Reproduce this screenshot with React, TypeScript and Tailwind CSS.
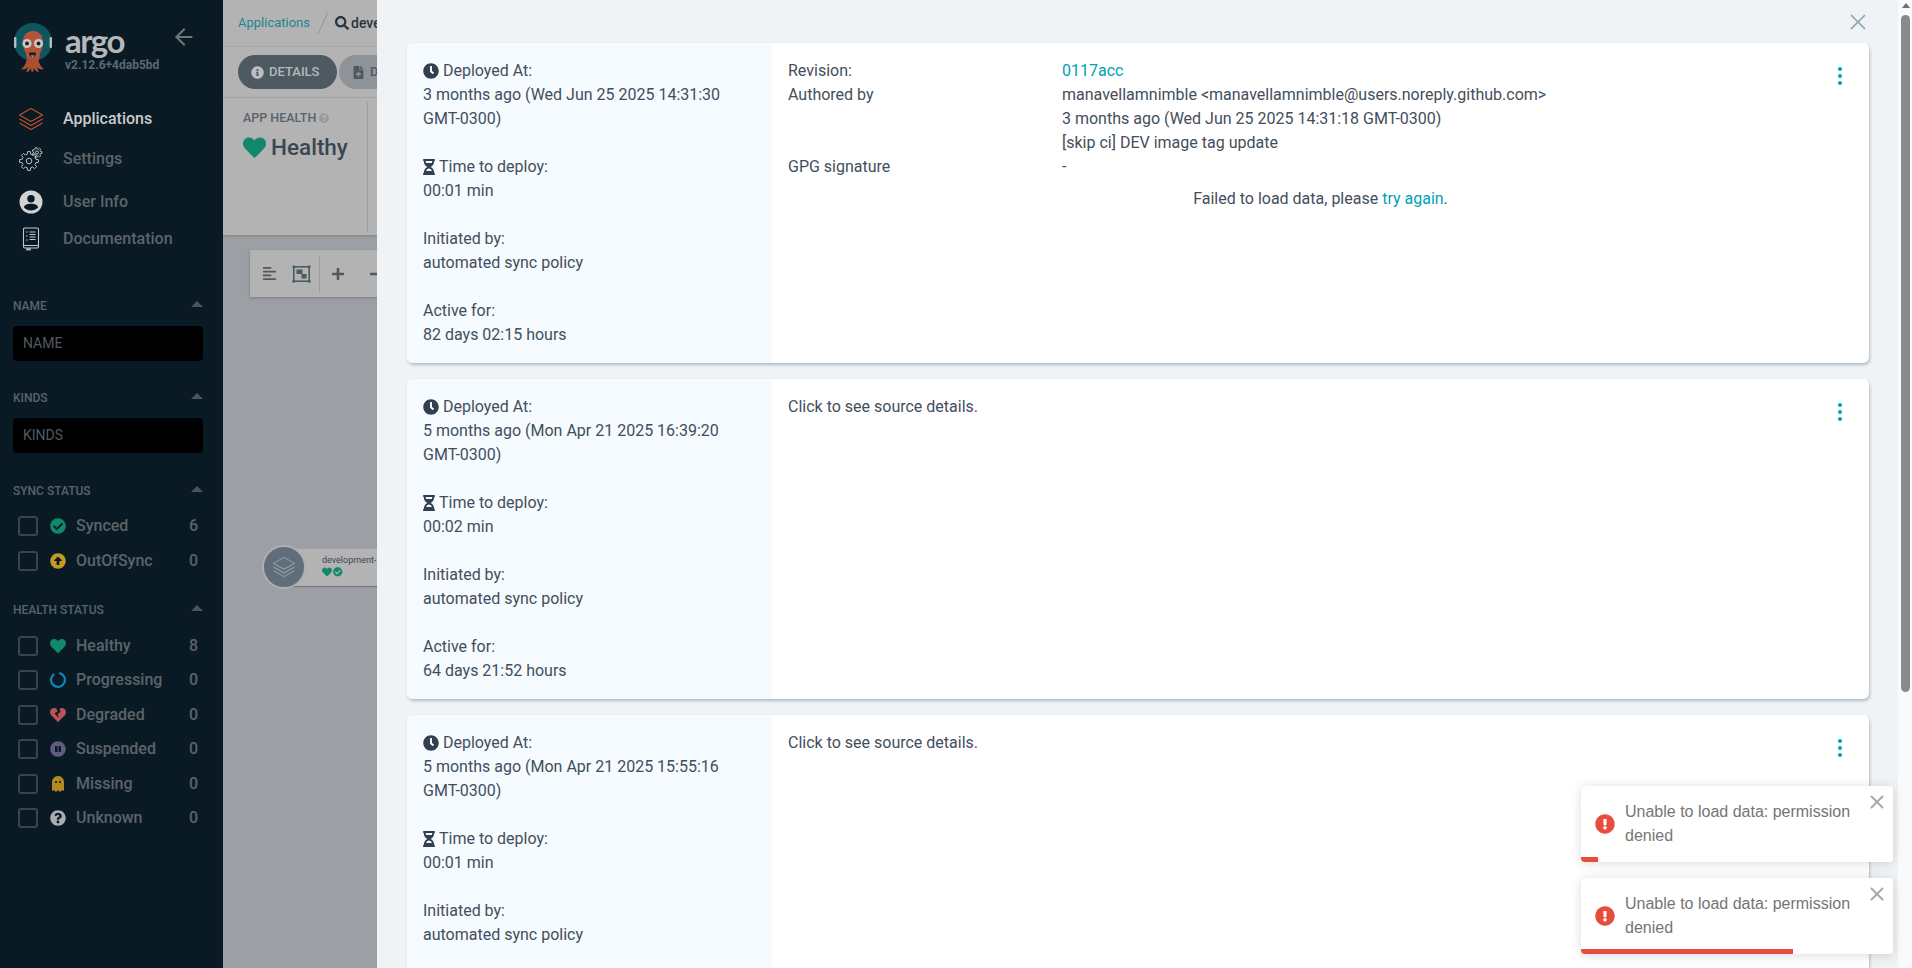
import React from "react";
import {
  FaHeart, FaHeartBroken, FaGhost, FaCheckCircle, FaArrowAltCircleUp, FaPauseCircle,
  FaQuestionCircle, FaClock, FaHourglassHalf, FaInfoCircle, FaFileMedical,
  FaSearch, FaAlignLeft, FaPlus, FaMinus, FaExclamationCircle,
} from "react-icons/fa";
import { ArrowLeft, X } from "lucide-react";

function gearPath(cx: number, cy: number, ro: number, ri: number, teeth: number) {
  let d = "";
  const step = (Math.PI * 2) / teeth;
  for (let i = 0; i < teeth; i++) {
    const a = i * step;
    const pts: [number, number][] = [
      [ri, a - step * 0.32],
      [ro, a - step * 0.18],
      [ro, a + step * 0.18],
      [ri, a + step * 0.32],
    ];
    pts.forEach(([r, t], j) => {
      d += `${i === 0 && j === 0 ? "M" : "L"}${(cx + r * Math.cos(t)).toFixed(2)} ${(cy + r * Math.sin(t)).toFixed(2)} `;
    });
  }
  return d + "Z";
}

function Logo() {
  return (
    <svg width="40" height="52" viewBox="12 22 40 52" className="shrink-0">
      <circle cx="32" cy="42" r="19" fill="#0e5560" />
      <rect x="13" y="37" width="2.4" height="11" rx="1" fill="#b8bcbe" />
      <rect x="48.6" y="37" width="2.4" height="11" rx="1" fill="#b8bcbe" />
      <path d="M22 42c0-7 4-11 10-11s10 4 10 11c0 6-2 9-3 12l-1 6H26l-1-6c-1-3-3-6-3-12z" fill="#b0553a" />
      <path d="M26 58c-1 6-3 9-6 11 3 1 5 0 7-2-1 2-1 4-2 5 3 0 4-2 5-4 0 2 0 3 1 4 1 0 2-2 2-4 1 2 2 4 5 4-1-1-1-3-2-5 2 2 4 3 7 2-3-2-5-5-6-11z" fill="#a94f34" />
      <circle cx="26" cy="43.5" r="4.6" fill="#c8c8c8" />
      <circle cx="37.5" cy="43.5" r="4.6" fill="#c8c8c8" />
      <circle cx="26" cy="43.5" r="2" fill="#222" />
      <circle cx="37.5" cy="43.5" r="2" fill="#222" />
      <path d="M28 52.5h7c0 3-1.5 4.5-3.5 4.5s-3.5-1.5-3.5-4.5z" fill="#1d1d1d" />
      <path d="M29.5 55.5h4l-2 1.5z" fill="#c8c8c8" />
    </svg>
  );
}

function LayersIcon() {
  return (
    <svg width="24" height="24" viewBox="0 0 24 24" fill="none" stroke="#c2512c" strokeWidth="1.1" strokeLinejoin="round">
      <path d="M12 1.5 23.5 8 12 14.5.5 8z" />
      <path d="M.5 12 12 18.5 23.5 12" />
      <path d="M.5 16 12 22.5 23.5 16" />
    </svg>
  );
}

function GearsIcon() {
  return (
    <svg width="24" height="24" viewBox="0 0 24 24" fill="none" stroke="#b9bdc0" strokeWidth="1" strokeLinejoin="round">
      <path d={gearPath(10, 14, 9.5, 7, 8)} />
      <circle cx="10" cy="14" r="2.8" />
      <path d={gearPath(18, 5.5, 5, 3.6, 7)} />
      <circle cx="18" cy="5.5" r="1.5" />
    </svg>
  );
}

function UserIcon() {
  return (
    <svg width="24" height="24" viewBox="0 0 24 24">
      <circle cx="12" cy="12" r="11.5" fill="#d2d2d2" />
      <circle cx="12" cy="8.7" r="3.7" fill="#0a1a24" />
      <path d="M5 17.5c0-2.6 3-3.8 7-3.8s7 1.2 7 3.8c-1.8 1.9-4.2 2.9-7 2.9s-5.2-1-7-2.9z" fill="#0a1a24" />
    </svg>
  );
}

function DocIcon() {
  return (
    <svg width="24" height="24" viewBox="0 0 24 24" fill="none" stroke="#c4c8cb" strokeWidth="1.1">
      <rect x="4.5" y="1" width="15" height="20" rx="1.2" />
      <path d="M4.5 18.5h15M8 21v2l1.5-.8L11 23v-2" />
      <path d="M7 5h1.5M7 9h1.5M7 13h1.5M10.5 5h6M10.5 7.5h6M10.5 10h6M10.5 12.5h6" strokeWidth="1.2" />
    </svg>
  );
}

function RingIcon() {
  return (
    <svg width="16" height="16" viewBox="0 0 16 16" fill="none" stroke="#0f86b5" strokeWidth="2.2">
      <path d="M9.2 1.2A6.9 6.9 0 1 1 4.2 2.2" />
    </svg>
  );
}

const navItems = [
  { label: "Applications", icon: <LayersIcon />, cls: "mt-[2px]", text: "text-[#c9cbcc] font-medium" },
  { label: "Settings", icon: <GearsIcon />, cls: "mt-[4px]", text: "text-[#5c6369] font-medium" },
  { label: "User Info", icon: <UserIcon />, cls: "mt-[7px]", text: "text-[#5c6369] font-medium" },
  { label: "Documentation", icon: <DocIcon />, cls: "mt-[1px]", text: "text-[#5c6369] font-medium" },
];

function SectionLabel({ title, cls }: { title: string; cls: string }) {
  return (
    <div className={`h-[16px] flex items-center justify-between pl-[13px] pr-[20px] ${cls}`}>
      <span className="text-[12px] leading-[16px] font-medium text-[#56646f]">{title}</span>
      <span className="w-0 h-0 border-l-[6.5px] border-r-[6.5px] border-b-[6px] border-l-transparent border-r-transparent border-b-[#4b545c] -mt-[4px]" />
    </div>
  );
}

function FilterInput({ placeholder }: { placeholder: string }) {
  return (
    <div className="mt-[12px] mx-[13px] h-[35px] w-[190px] rounded-[4px] bg-black flex items-center pl-[10px] text-[14px] text-[#525a61]">
      {placeholder}
    </div>
  );
}

function StatusRow({ label, count, icon }: { label: string; count: number; icon: React.ReactNode }) {
  return (
    <div className="h-[34.4px] flex items-center pl-[18px] pr-[25px]">
      <span className="w-[20px] h-[20px] rounded-[3px] border-2 border-[#3a444c] shrink-0" />
      <span className="w-[38px] flex justify-center pl-[2px] shrink-0">{icon}</span>
      <span className="flex-1 text-[16px] font-medium text-[#5c6369]">{label}</span>
      <span className="text-[16px] font-medium text-[#5c6369]">{count}</span>
    </div>
  );
}

function DeployInfo({ date, time, active }: { date: string; time: string; active?: string }) {
  return (
    <div className="w-[365px] shrink-0 bg-[#f5fbfe] p-[16px] text-[16px] leading-[24px] rounded-l-[6px]">
      <div className="flex items-center gap-[4px]">
        <FaClock className="text-[16px] text-[#343f4d]" />
        <span>Deployed At:</span>
      </div>
      <div className="mb-[24px]">{date}</div>
      <div className="flex items-center gap-[4px]">
        <FaHourglassHalf className="w-[12px] h-[16px] text-[#343f4d]" />
        <span>Time to deploy:</span>
      </div>
      <div className="mb-[24px]">{time}</div>
      <div>Initiated by:</div>
      <div className="mb-[24px]">automated sync policy</div>
      {active && (
        <>
          <div>Active for:</div>
          <div>{active}</div>
        </>
      )}
    </div>
  );
}

function Dots() {
  return (
    <div className="shrink-0 mr-[27px] mt-[8px] flex flex-col gap-[2.5px]">
      <span className="w-[4.4px] h-[4.4px] rounded-full bg-[#00a2b3]" />
      <span className="w-[4.4px] h-[4.4px] rounded-full bg-[#00a2b3]" />
      <span className="w-[4.4px] h-[4.4px] rounded-full bg-[#00a2b3]" />
    </div>
  );
}

function Card({ children, deploy, last }: { children: React.ReactNode; deploy: { date: string; time: string; active?: string }; last?: boolean }) {
  return (
    <div className={`flex h-[320px] shrink-0 bg-white rounded-[6px] shadow-[1px_2px_3px_rgba(70,90,110,0.35)] text-[#434e5c] ${last ? "" : "mb-[16px]"}`}>
      <DeployInfo {...deploy} />
      {children}
    </div>
  );
}

function Toast({ barWidth }: { barWidth: string }) {
  return (
    <div className="relative w-[312px] h-[76px] bg-white rounded-[4px] shadow-[0_1px_10px_rgba(0,0,0,0.1),0_2px_15px_rgba(0,0,0,0.05)] flex items-center pl-[14px] overflow-hidden">
      <FaExclamationCircle className="text-[20px] text-[#e74c3c] shrink-0" />
      <div className="ml-[10px] w-[240px] text-[16px] leading-[24px] text-[#757575] font-['Liberation_Sans',Arial,sans-serif]">
        Unable to load data: permission denied
      </div>
      <X size={22} strokeWidth={2.2} className="absolute right-[5px] top-[5px] text-[#a9a9a9]" />
      <div className={`absolute left-0 bottom-0 h-[5px] bg-[#e74c3c] ${barWidth}`} />
    </div>
  );
}

export default function App() {
  return (
    <div className="relative flex h-[968px] w-[1912px] overflow-hidden font-['Roboto',sans-serif]">
      {/* Sidebar */}
      <aside className="w-[223px] shrink-0 bg-[#0a1a24] flex flex-col">
        <div className="h-[99px] flex items-start pl-[13px] pt-[22px]">
          <Logo />
          <div className="ml-[12px] flex flex-col">
            <span className="h-[26px] text-[33px] leading-[26px] font-bold font-['Lato',sans-serif] text-[#b5b7b8] tracking-[-1.5px] mt-[5px]">argo</span>
            <span className="text-[12px] leading-[14px] font-bold text-[#5b6871] mt-[5px]">v2.12.6+4dab5bd</span>
          </div>
          <ArrowLeft size={26} strokeWidth={1.9} className="ml-[12px] mt-[2px] text-[#70777c]" />
        </div>
        {navItems.map((n) => (
          <div key={n.label} className={`h-[36px] flex items-center pl-[19px] ${n.cls}`}>
            <span className="w-[24px] flex justify-center">{n.icon}</span>
            <span className={`ml-[20px] text-[16px] ${n.text}`}>{n.label}</span>
          </div>
        ))}

        <SectionLabel title="NAME" cls="mt-[41px]" />
        <FilterInput placeholder="NAME" />
        <SectionLabel title="KINDS" cls="mt-[29px]" />
        <FilterInput placeholder="KINDS" />
        <SectionLabel title="SYNC STATUS" cls="mt-[30px]" />
        <div className="mt-[10px]">
          <StatusRow label="Synced" count={6} icon={<FaCheckCircle className="text-[16px] text-[#12886b]" />} />
          <StatusRow label="OutOfSync" count={0} icon={<FaArrowAltCircleUp className="text-[16px] text-[#c29a25]" />} />
        </div>
        <SectionLabel title="HEALTH STATUS" cls="mt-[24px]" />
        <div className="mt-[11px]">
          <StatusRow label="Healthy" count={8} icon={<FaHeart className="text-[16px] text-[#12886b]" />} />
          <StatusRow label="Progressing" count={0} icon={<RingIcon />} />
          <StatusRow label="Degraded" count={0} icon={<FaHeartBroken className="text-[16px] text-[#b95457]" />} />
          <StatusRow label="Suspended" count={0} icon={<FaPauseCircle className="text-[16px] text-[#635a80]" />} />
          <StatusRow label="Missing" count={0} icon={<FaGhost className="text-[16px] text-[#b38a1f]" />} />
          <StatusRow label="Unknown" count={0} icon={<FaQuestionCircle className="text-[16px] text-[#a9aeb3]" />} />
        </div>
      </aside>

      {/* Dimmed page beneath the panel */}
      <main className="w-[154px] shrink-0 flex flex-col overflow-hidden bg-[#9ca0a4]">
        <div className="h-[47px] shrink-0 bg-[#b3b3b3] border-b border-[#a8a8a8] flex items-center pl-[15px] whitespace-nowrap">
          <span className="text-[13px] text-[#1b8794]">Applications</span>
          <svg width="12" height="24" viewBox="0 0 12 24" className="ml-[7px] shrink-0">
            <path d="M11 1 1 23" stroke="#949494" strokeWidth="1" />
          </svg>
          <FaSearch className="ml-[6px] text-[14px] text-[#2a333b] shrink-0" />
          <span className="ml-[2px] text-[14px] font-medium text-[#2a333b]">development</span>
        </div>
        <div className="h-[51px] shrink-0 bg-[#b3b3b3] border-b border-[#a8a8a8] flex items-center pl-[15px] gap-[2px] whitespace-nowrap">
          <div className="h-[34px] w-[99px] shrink-0 rounded-[17px] bg-[#4d5a62] flex items-center pl-[13px] gap-[5px] text-[13px] font-medium text-[#b5b8ba]">
            <FaInfoCircle className="text-[13px] text-[#bcbfc1]" /> DETAILS
          </div>
          <div className="h-[34px] w-[99px] shrink-0 rounded-[17px] bg-[#8d9399] flex items-center pl-[13px] gap-[5px] text-[13px] font-medium text-[#4d5a62]">
            <FaFileMedical className="text-[13px]" /> DIFF
          </div>
        </div>
        <div className="h-[137px] shrink-0 bg-[#b3b3b3] shadow-[0_1px_3px_rgba(0,0,0,0.2)] flex pl-[20px] py-[4px] whitespace-nowrap">
          <div className="w-[125px] shrink-0 border-r border-[#9c9c9c] pt-[7px]">
            <div className="flex items-center gap-[3px] text-[12.5px] font-medium text-[#58636b]">
              APP HEALTH <FaQuestionCircle className="text-[10px] text-[#959a9e]" />
            </div>
            <div className="mt-[3px] flex items-center gap-[5px]">
              <FaHeart className="text-[23px] text-[#12886b]" />
              <span className="text-[22.5px] font-medium text-[#3a4750]">Healthy</span>
            </div>
          </div>
        </div>
        <div className="relative flex-1">
          <div className="absolute left-[27px] top-[15px] w-[200px] h-[47px] bg-[#b3b3b3] shadow-[0_1px_3px_rgba(0,0,0,0.2)] flex items-center pl-[12px] text-[#4d5a62]">
            <FaAlignLeft className="text-[15px]" />
            <svg width="19" height="18" viewBox="0 0 19 18" className="ml-[15px] shrink-0" fill="none" stroke="#4d5a62" strokeWidth="1.6">
              <rect x="1.8" y="1.8" width="15.4" height="14.4" />
              <rect x="4.5" y="4.5" width="6" height="4.5" fill="#4d5a62" stroke="none" />
              <rect x="9.5" y="9" width="5" height="4.5" fill="#4d5a62" stroke="none" />
              <circle cx="1.8" cy="1.8" r="1.5" fill="#4d5a62" stroke="none" />
              <circle cx="17.2" cy="1.8" r="1.5" fill="#4d5a62" stroke="none" />
              <circle cx="1.8" cy="16.2" r="1.5" fill="#4d5a62" stroke="none" />
              <circle cx="17.2" cy="16.2" r="1.5" fill="#4d5a62" stroke="none" />
            </svg>
            <span className="ml-[8px] w-px h-[36px] bg-[#9c9c9c]" />
            <FaPlus className="ml-[11px] text-[14px]" />
            <FaMinus className="ml-[24px] text-[14px]" />
          </div>
          <div className="absolute left-[62px] top-[314px] w-[160px] h-[37px] bg-[#b3b3b3] shadow-[0_1px_1px_rgba(0,0,0,0.25)] pl-[37px] pt-[6px] text-[9px] leading-[11px] text-[#3f474e]">
            <div className="whitespace-nowrap">development-</div>
            <div className="flex items-center gap-[1px] mt-[1px]">
              <FaHeart className="text-[10px] text-[#12886b]" />
              <FaCheckCircle className="text-[9.5px] text-[#12886b]" />
            </div>
          </div>
          <div className="absolute left-[39px] top-[310px] w-[44px] h-[44px] rounded-full bg-[#5f6e7a] border-2 border-[#aeb0b2] flex items-center justify-center">
            <svg width="22" height="22" viewBox="0 0 24 24" fill="none" stroke="#93a2ae" strokeWidth="1.1" strokeLinejoin="round">
              <path d="M12 1.5 23.5 8 12 14.5.5 8z" />
              <path d="M.5 12 12 18.5 23.5 12" />
              <path d="M.5 16 12 22.5 23.5 16" />
            </svg>
          </div>
        </div>
      </main>

      {/* Sliding panel */}
      <section className="flex-1 min-w-0 bg-[#eff3f6] flex flex-col overflow-hidden pl-[30px] pr-[29px]">
        <div className="h-[43px] shrink-0 flex items-center justify-end">
          <X size={26} strokeWidth={1.6} className="-mr-[2px] text-[#8fa4b1]" />
        </div>
        <Card deploy={{ date: "3 months ago (Wed Jun 25 2025 14:31:30 GMT-0300)", time: "00:01 min", active: "82 days 02:15 hours" }}>
          <div className="flex-1 flex flex-col pt-[16px] pl-[16px] text-[16px] leading-[24px]">
            <div className="flex">
              <div className="flex-1 grid grid-cols-[274px_1fr]">
                <div>Revision:</div>
                <div className="text-[#00a2b3]">0117acc</div>
                <div>Authored by</div>
                <div>
                  <div>manavellamnimble &lt;manavellamnimble@users.noreply.github.com&gt;</div>
                  <div>3 months ago (Wed Jun 25 2025 14:31:18 GMT-0300)</div>
                  <div>[skip ci] DEV image tag update</div>
                </div>
                <div>GPG signature</div>
                <div>-</div>
              </div>
              <Dots />
            </div>
            <div className="-ml-[16px] mt-[8px] text-center">
              Failed to load data, please <span className="text-[#00a2b3]">try again</span>.
            </div>
          </div>
        </Card>
        <Card deploy={{ date: "5 months ago (Mon Apr 21 2025 16:39:20 GMT-0300)", time: "00:02 min", active: "64 days 21:52 hours" }}>
          <div className="flex-1 flex pt-[16px] pl-[16px] text-[16px] leading-[24px]">
            <div className="flex-1">Click to see source details.</div>
            <Dots />
          </div>
        </Card>
        <Card last deploy={{ date: "5 months ago (Mon Apr 21 2025 15:55:16 GMT-0300)", time: "00:01 min" }}>
          <div className="flex-1 flex pt-[16px] pl-[16px] text-[16px] leading-[24px]">
            <div className="flex-1">Click to see source details.</div>
            <Dots />
          </div>
        </Card>
      </section>

      {/* Scrollbar */}
      <div className="w-[14px] shrink-0 bg-[#fafafa] flex flex-col items-center pl-[3px] pr-[2px]">
        <span className="mt-[3px] w-0 h-0 border-l-[4px] border-r-[4px] border-b-[5px] border-l-transparent border-r-transparent border-b-[#6e6e6e]" />
        <span className="mt-[7px] w-[9px] h-[677px] rounded-full bg-[#8a8a8a]" />
      </div>

      {/* Toasts */}
      <div className="absolute left-[1581px] top-[786px] flex flex-col gap-[16px]">
        <Toast barWidth="w-[17px]" />
        <Toast barWidth="w-[212px]" />
      </div>
    </div>
  );
}
